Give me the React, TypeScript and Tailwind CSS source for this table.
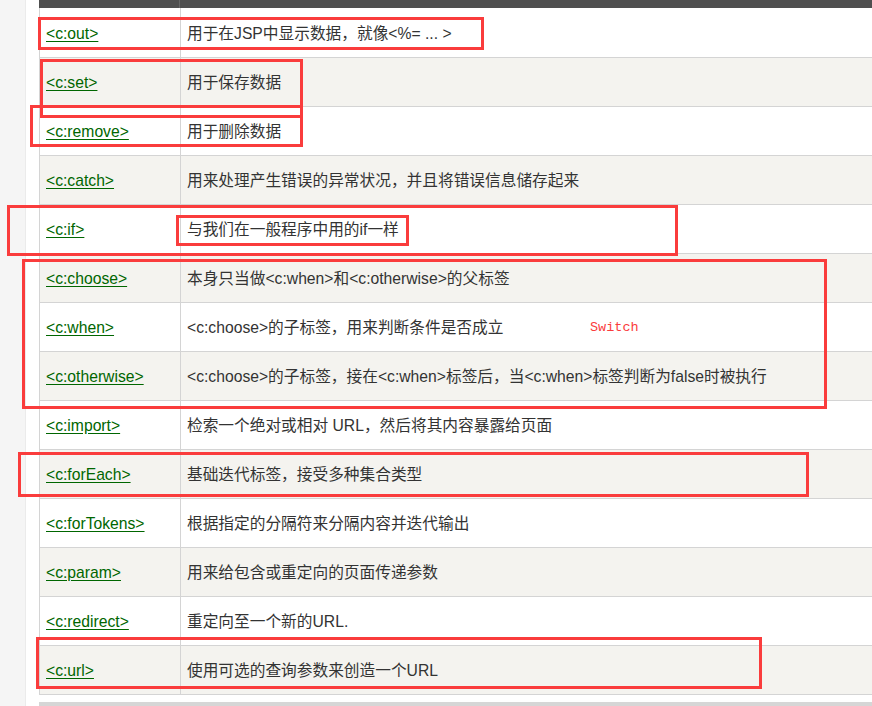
import React from "react";

const rows: [string, string][] = [
  ["<c:out>", "用于在JSP中显示数据，就像<%= ... >"],
  ["<c:set>", "用于保存数据"],
  ["<c:remove>", "用于删除数据"],
  ["<c:catch>", "用来处理产生错误的异常状况，并且将错误信息储存起来"],
  ["<c:if>", "与我们在一般程序中用的if一样"],
  ["<c:choose>", "本身只当做<c:when>和<c:otherwise>的父标签"],
  ["<c:when>", "<c:choose>的子标签，用来判断条件是否成立"],
  ["<c:otherwise>", "<c:choose>的子标签，接在<c:when>标签后，当<c:when>标签判断为false时被执行"],
  ["<c:import>", "检索一个绝对或相对 URL，然后将其内容暴露给页面"],
  ["<c:forEach>", "基础迭代标签，接受多种集合类型"],
  ["<c:forTokens>", "根据指定的分隔符来分隔内容并迭代输出"],
  ["<c:param>", "用来给包含或重定向的页面传递参数"],
  ["<c:redirect>", "重定向至一个新的URL."],
  ["<c:url>", "使用可选的查询参数来创造一个URL"],
];

const Box = ({ l, t, r, b }: { l: number; t: number; r: number; b: number }) => (
  <div
    className="absolute border-[3px] border-[#fa3c3c] pointer-events-none"
    style={{ left: l, top: t, width: r - l, height: b - t }}
  />
);

export default function App() {
  return (
    <div
      className="relative w-[872px] h-[706px] overflow-hidden bg-white flex"
      style={{ fontFamily: '"Liberation Sans", "Noto Sans CJK SC", sans-serif' }}
    >
      <div className="w-[26px] shrink-0 bg-[#f5f5f5] border-r border-[#ebebeb]" />
      <div className="w-[13px] shrink-0" />
      <div className="flex flex-col w-[860px] shrink-0">
        <div className="-mt-[32px] h-[41px] bg-[#4f4f4f] flex text-white font-bold text-[15.7px]">
          <div className="w-[141px] px-[7px] flex items-center border-r border-[#666]">标签</div>
          <div className="px-[6px] flex items-center">描述</div>
        </div>
        <div className="border-l border-b border-[#d4d4d4]">
          {rows.map(([tag, desc], i) => (
            <div
              key={tag}
              className={`flex h-[49px] pt-[2px] text-[15.7px] text-[#333] ${i > 0 ? "border-t border-[#d4d4d4]" : ""} ${
                i % 2 === 1 ? "bg-[#f4f3ef]" : "bg-white"
              }`}
            >
              <div className="w-[141px] shrink-0 px-[6px] flex items-center border-r border-[#d4d4d4] -mt-[2px] pt-[2px]">
                <a className="text-[#006600] underline underline-offset-2">{tag}</a>
              </div>
              <div className="px-[6px] flex items-center whitespace-nowrap">{desc}</div>
            </div>
          ))}
        </div>
        <div className="mt-[7px] h-[4px] bg-[#d6d6d6]" />
      </div>

      <Box l={38} t={17} r={484} b={50} />
      <Box l={40} t={59} r={303} b={118} />
      <Box l={30} t={105} r={303} b={147} />
      <Box l={7} t={205} r={678} b={256} />
      <Box l={176} t={215} r={409} b={246} />
      <Box l={22} t={259} r={827} b={409} />
      <Box l={18} t={452} r={809} b={497} />
      <Box l={36} t={637} r={762} b={689} />
      <div
        className="absolute left-[590px] top-[318px] text-[13.5px] text-[#fa3c3c]"
        style={{ fontFamily: '"Liberation Mono", monospace' }}
      >
        Switch
      </div>
    </div>
  );
}
